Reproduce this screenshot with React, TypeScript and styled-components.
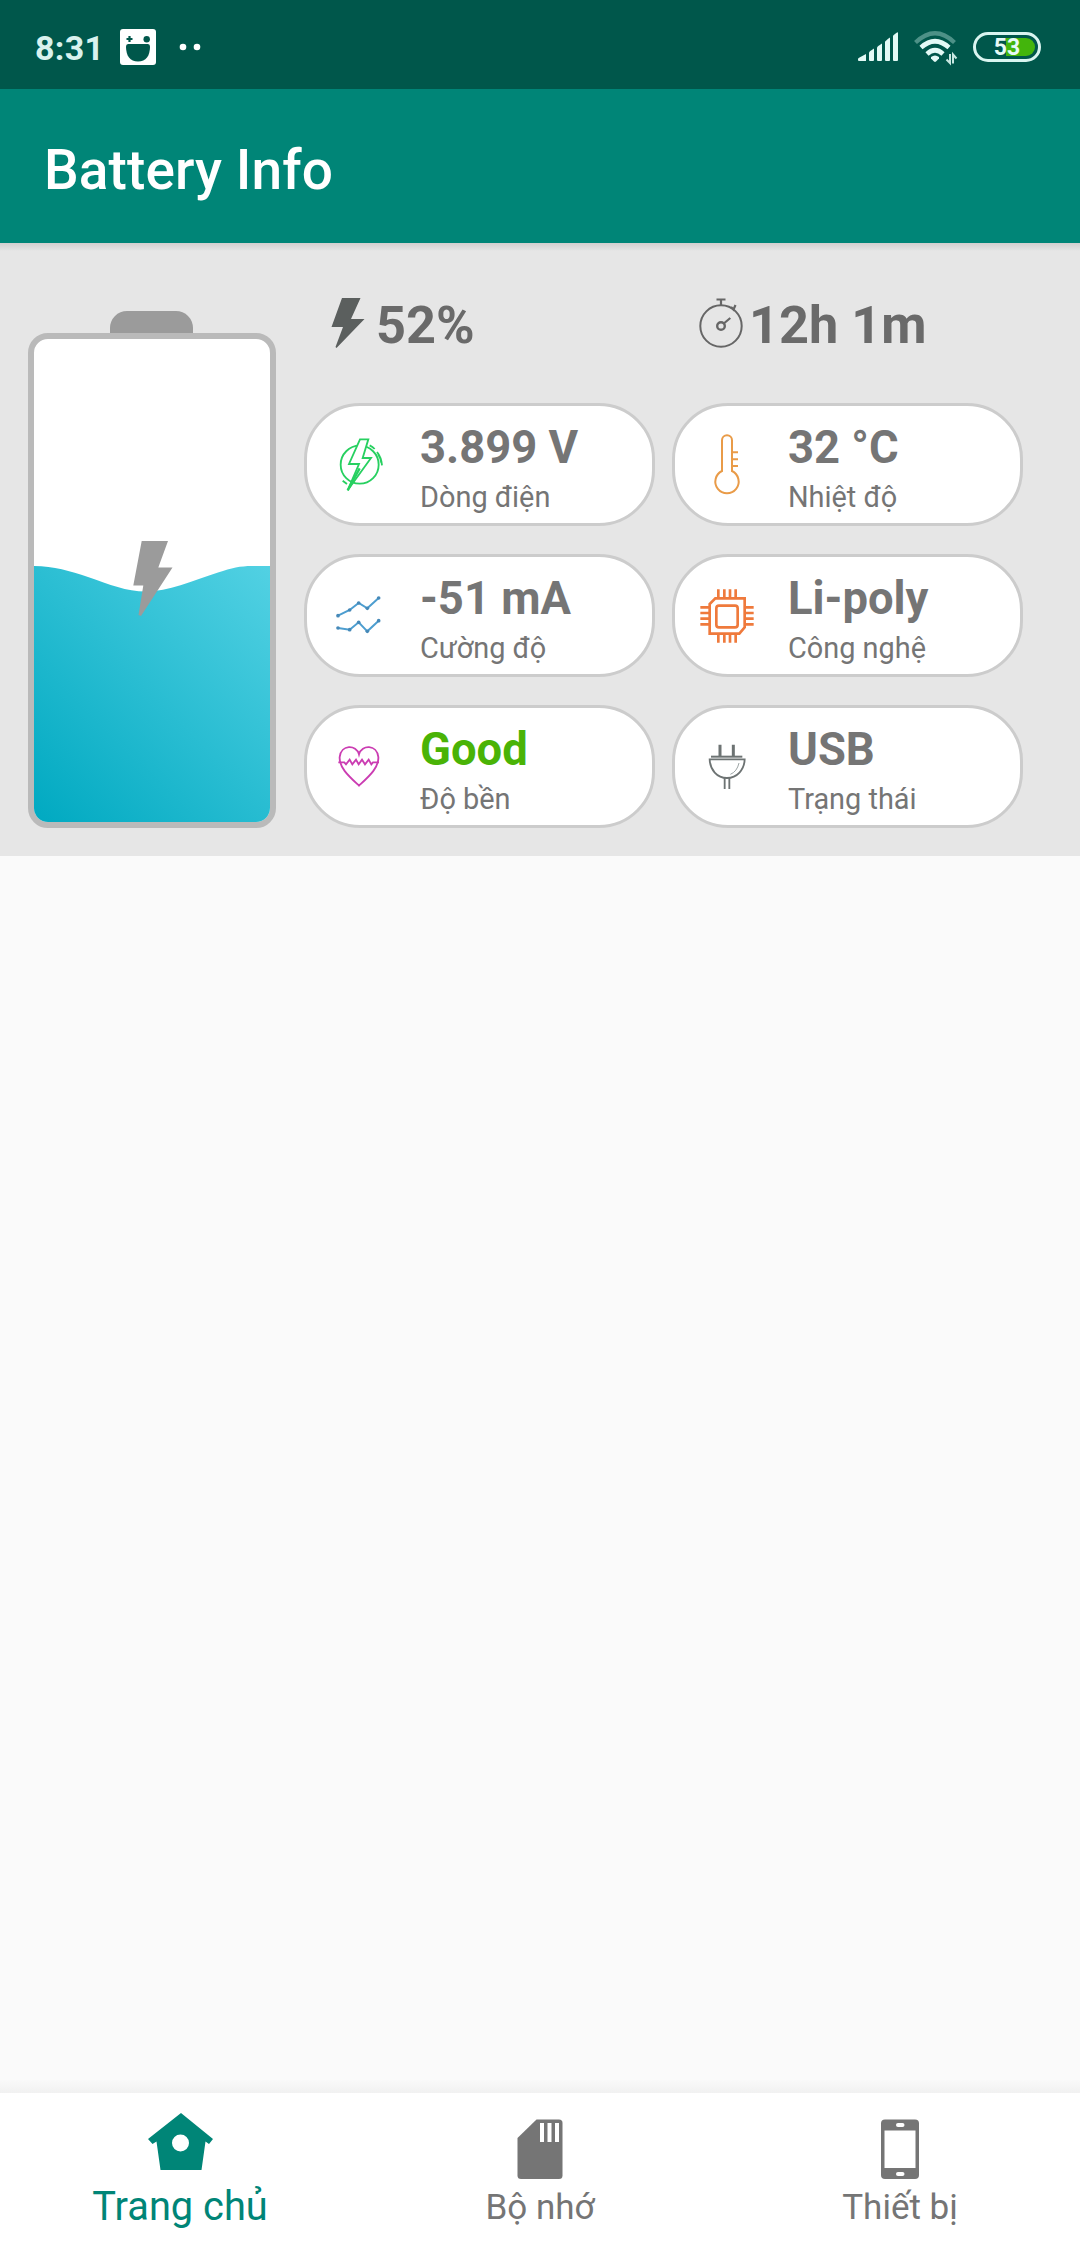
import React from "react";
import styled, { createGlobalStyle } from "styled-components";

const GlobalStyle = createGlobalStyle`
  html, body { margin: 0; padding: 0; }
  body { background: #fafafa; font-family: Roboto, "Noto Sans", sans-serif; }
  * { box-sizing: border-box; }
  svg { display: block; overflow: visible; flex-shrink: 0; }
`;

const Screen = styled.div`
  display: flex;
  flex-direction: column;
  width: 1080px;
  height: 2248px;
  background: #fafafa;
  overflow: hidden;
`;

const StatusBar = styled.header`
  display: flex;
  align-items: center;
  justify-content: space-between;
  height: 89px;
  padding: 5px 39px 0 35px;
  background: #00574b;
`;

const StatusGroup = styled.div<{ $gap: number }>`
  display: flex;
  align-items: center;
  gap: ${(p) => p.$gap}px;
`;

const Clock = styled.span`
  width: 67px;
  padding-top: 2px;
  font-size: 34px;
  line-height: 40px;
  font-weight: 700;
  letter-spacing: 0.3px;
  color: #d9f2ee;
`;

const BatteryPill = styled.div`
  position: relative;
  display: flex;
  align-items: center;
  justify-content: center;
  width: 68px;
  height: 30px;
  padding-top: 2px;
  border: 3px solid #d9f5f0;
  border-radius: 15px;
  color: #e6faf6;
  font-size: 23px;
  font-weight: 700;
  line-height: 24px;

  &::before {
    content: "";
    position: absolute;
    top: 3px;
    right: 3px;
    width: 29px;
    height: 18px;
    border-radius: 0 9px 9px 0;
    background: #43b50c;
  }

  span {
    position: relative;
  }
`;

const AppBar = styled.div`
  display: flex;
  align-items: center;
  height: 154px;
  padding: 7px 44px 0;
  background: #008577;
`;

const Title = styled.h1`
  margin: 0;
  color: #fff;
  font-size: 55px;
  font-weight: 500;
  line-height: 64px;
  letter-spacing: 0.1px;
`;

const Panel = styled.section`
  display: flex;
  gap: 28px;
  height: 613px;
  padding-left: 28px;
  background: linear-gradient(#d2cfcf, #e6e6e6 8px);
`;

const BatteryColumn = styled.div`
  width: 248px;
  padding-top: 68px;
`;

const BatteryCap = styled.div`
  width: 83px;
  height: 22px;
  margin-left: 82px;
  border-radius: 17px 17px 0 0;
  background: #9b9b9b;
`;

const BatteryBody = styled.div`
  width: 248px;
  height: 495px;
  border: 6px solid #bababa;
  border-radius: 20px;
  background: #fff;
  overflow: hidden;
`;

const Details = styled.div`
  display: flex;
  flex-direction: column;
`;

const Summary = styled.div`
  display: grid;
  grid-template-columns: 351px 351px;
  column-gap: 17px;
  height: 160px;
  padding-top: 5px;
`;

const SummaryItem = styled.div<{ $gap: number }>`
  display: flex;
  align-items: center;
  gap: ${(p) => p.$gap}px;
  padding-left: 27px;

  svg {
    margin-bottom: 5px;
  }
`;

const SummaryText = styled.strong`
  color: #6a6a6a;
  font-size: 52.25px;
  font-weight: 700;
  line-height: 60px;
  white-space: nowrap;
`;

const Cards = styled.div`
  display: grid;
  grid-template-columns: 351px 351px;
  grid-auto-rows: 123px;
  gap: 28px 17px;
`;

const Card = styled.article`
  display: flex;
  padding-left: 22px;
  border: 3px solid #ccc;
  border-radius: 56px;
  background: #fff;
`;

const CardIcon = styled.div`
  display: flex;
  align-items: center;
  width: 60px;
`;

const CardText = styled.div`
  padding: 14px 0 0 31px;
  white-space: nowrap;
`;

const Value = styled.div<{ $color?: string }>`
  color: ${(p) => p.$color ?? "#757575"};
  font-size: 45.375px;
  font-weight: 700;
  line-height: 55px;
`;

const Label = styled.div`
  margin-top: 4px;
  color: #757575;
  font-size: 28.9px;
  line-height: 36px;
`;

const Content = styled.main`
  flex: 1;
  background: linear-gradient(to top, #f1f1f1, #fafafa 14px);
`;

const BottomNav = styled.nav`
  display: grid;
  grid-template-columns: repeat(3, 1fr);
  height: 155px;
  background: #fff;
`;

const NavItem = styled.div<{ $active?: boolean }>`
  display: flex;
  flex-direction: column;
  align-items: center;
  gap: ${(p) => (p.$active ? 14 : 6)}px;
  padding-top: ${(p) => (p.$active ? 20 : 26)}px;
  color: ${(p) => (p.$active ? "#008577" : "#757575")};
  font-size: ${(p) => (p.$active ? 39.8 : 35)}px;
  line-height: 46px;
`;

const FaceIcon = () => (
  <svg width="36" height="36" viewBox="0 0 36 36">
    <rect width="36" height="36" rx="3" fill="#fff" />
    <path d="M9.500 7v6M6.500 10h6" stroke="#00574b" strokeWidth="2.200" />
    <circle cx="26.700" cy="10.200" r="3.200" fill="#00574b" />
    <path d="M8 15h20q2 0 2 2.500C30 27 26 32.500 18 32.500S6 27 6 17.500Q6 15 8 15Z" fill="#00574b" />
  </svg>
);

const DotsIcon = () => (
  <svg width="32" height="8" viewBox="-5 0 32 8">
    <circle cx="4" cy="4" r="3.300" fill="#fff" />
    <circle cx="18" cy="4" r="3.300" fill="#fff" />
  </svg>
);

const SignalIcon = () => (
  <svg width="40" height="30" viewBox="0 0 40 30">
    <g fill="#e3faf6">
      <path d="M0 27Q0 26 1.500 25.500L8 22v7H1Q0 29 0 28Z" />
      <path d="M11 20.500Q11 19.500 16 16.500V28q0 1-1 1h-3q-1 0-1-1Z" />
      <path d="M19 15.500Q19 14.500 24 11.500V28q0 1-1 1h-3q-1 0-1-1Z" />
      <path d="M27 10Q27 9 32 5.500V28q0 1-1 1h-3q-1 0-1-1Z" />
      <path d="M35 4Q35 3 39 .5q1-.5 1 .5V28q0 1-1 1h-3q-1 0-1-1Z" />
    </g>
  </svg>
);

const WifiIcon = () => (
  <svg width="43" height="32" viewBox="0 0 43 32" fill="none">
    <path d="M1.500 11.500Q21-7 40.500 11.500" stroke="#4d9187" strokeWidth="4.200" />
    <path d="M7 16.500Q21 4 35 16.500" stroke="#e3faf6" strokeWidth="4.600" />
    <path d="M13 23Q21 15.500 29 23" stroke="#e3faf6" strokeWidth="4.600" />
    <path d="M17 26q4-3 8 0v1.500l-3 3q-1 .8-2 0l-3-3Z" fill="#e3faf6" />
    <path d="M36 23v9L32.500 28.500M39 32.500v-9l3.500 4" stroke="#c8e8e2" strokeWidth="2" />
  </svg>
);

/* Liquid level inside the battery with the charging bolt over its surface */
const BatteryFill = () => (
  <svg width="236" height="483" viewBox="0 0 236 483">
    <defs>
      <linearGradient id="liquid" gradientUnits="userSpaceOnUse" x1="-4" y1="479" x2="240" y2="231">
        <stop offset="0" stopColor="#00a9c1" />
        <stop offset="1" stopColor="#52d1e3" />
      </linearGradient>
    </defs>
    <path
      d="M0 227C20 227 36 232 54 238C76 245.500 92 252.500 112 252.500C134 252.500 158 242 184 233.500C198 229 206 227 218 227H236V483H0Z"
      fill="url(#liquid)"
    />
    <path d="M107.700 202H134L124.300 228.500H138.500L107 277L104.500 276L109.300 246.500H99.300Z" fill="#9b9b9b" />
  </svg>
);

const BoltIcon = () => (
  <svg width="34" height="50" viewBox="0 0 34 50">
    <path d="M11 0H29.500L20 21H33.500L5.500 50L4.500 49L12 29H.5Z" fill="#5b5f5e" />
  </svg>
);

const StopwatchIcon = () => (
  <svg width="44" height="50" viewBox="0 0 44 50" fill="none" stroke="#666" strokeWidth="2">
    <circle cx="22" cy="28" r="20.700" />
    <circle cx="22" cy="28" r="3.800" strokeWidth="2.400" />
    <path d="M17.500 1.500h9M22 1.500v6M24.800 25.500l6.500-5.500M32 9l2.500 2.500 2-4.500" strokeWidth="2.200" />
  </svg>
);

const CardSvg = (props: React.SVGProps<SVGSVGElement>) => (
  <svg width="60" height="60" viewBox="0 0 180 180" fill="none" {...props} />
);

const VoltageIcon = () => (
  <CardSvg stroke="#27d060" strokeWidth="5.500">
    <circle cx="92" cy="89" r="57" />
    <path d="M122 31Q131 35 137 42M144 51Q157 66 159 91M147 57Q155 69 157 84M41 137L54 147" />
    <path d="M93 13H118L101 69H126L56 166L90 87H60Z" fill="#fff" />
    <path d="M92 100L56 166" strokeWidth="7" />
  </CardSvg>
);

const ThermometerIcon = () => (
  <CardSvg stroke="#e99b48" strokeWidth="6">
    <path d="M75 108V16a15 15 0 0 1 30 0V108A35 35 0 1 1 75 108Z" />
    <path d="M105 52h18M105 73h18M105 93h18" />
  </CardSvg>
);

const ChartIcon = () => (
  <CardSvg stroke="#4d9ed0" strokeWidth="6">
    <path d="M27 89L62 72L89 51L115 67L149 36M27 126L62 131L89 109L115 136L149 104" />
    <g fill="#4689b8" stroke="none">
      {[[27, 89], [62, 72], [89, 51], [115, 67], [149, 36], [27, 126], [62, 131], [89, 109], [115, 136], [149, 104]].map(
        ([x, y]) => (
          <circle key={`${x}-${y}`} cx={x} cy={y} r="5.500" />
        )
      )}
    </g>
  </CardSvg>
);

const ChipIcon = () => (
  <CardSvg stroke="#ef7a3c" strokeWidth="8">
    <path d="M55 37H143V124L127 143H38V54Z" />
    <rect x="58" y="59" width="64" height="65" rx="8" />
    <path d="M64 34V10M82 34V10M99 34V10M116 34V10M64 144V170M82 144V170M99 144V170M116 144V170" />
    <path d="M36 64H10M36 81H10M36 98H10M36 115H10M144 64H170M144 81H170M144 98H170M144 115H170" />
  </CardSvg>
);

const HeartIcon = () => (
  <CardSvg stroke="#cb3cb2" strokeWidth="5.500">
    <path d="M90 52C82 22 36 22 32 60C30 92 60 118 90 146C120 118 150 92 148 60C144 22 98 22 90 52Z" />
    <path d="M28 76H46L51 82L62 68L70 82L81 68L89 82L99 68L108 82L119 68L127 82L132 76H150" />
  </CardSvg>
);

const PlugIcon = () => (
  <CardSvg stroke="#6d7373" strokeWidth="5.500">
    <path d="M69 58V23M109 58V23" strokeWidth="9" />
    <path d="M42 59H136" strokeWidth="6" />
    <path d="M38 67H143C142 98 120 123 90 123S39 98 38 67Z" />
    <path d="M126 78Q120 104 100 112" stroke="#9da5a5" strokeWidth="3" />
    <path d="M83 123V156M97 123V156" />
  </CardSvg>
);

const HomeIcon = () => (
  <svg width="65" height="57" viewBox="0 0 65 57">
    <path
      fillRule="evenodd"
      fill="#008577"
      d="M33 0L65 26L61 31L57.500 28.500L53.500 57H12.500L8.500 28.500L4.500 31L0 26ZM32.500 21.500a8.500 8.500 0 1 0 0 17a8.500 8.500 0 1 0 0-17Z"
    />
  </svg>
);

const SdCardIcon = () => (
  <svg width="46" height="60" viewBox="0 0 46 60">
    <path d="M19.500 .5H42q3.500 0 3.500 3.500V56.500q0 3.500-3.500 3.500H4Q.5 60 .5 56.500V19Z" fill="#757575" />
    <path d="M25 4v19M32.500 4v19M40 4v19" stroke="#fff" strokeWidth="4" />
  </svg>
);

const PhoneIcon = () => (
  <svg width="38" height="60" viewBox="0 0 38 60">
    <rect y=".5" width="38" height="59.500" rx="4" fill="#757575" />
    <rect x="3.500" y="11.500" width="31" height="37.500" fill="#fff" />
    <rect x="15" y="4" width="8.500" height="4" rx="2" fill="#fff" />
    <rect x="15" y="53" width="8.500" height="4" rx="2" fill="#fff" />
  </svg>
);

const readings = [
  { icon: <VoltageIcon />, value: "3.899 V", label: "Dòng điện" },
  { icon: <ThermometerIcon />, value: "32 °C", label: "Nhiệt độ" },
  { icon: <ChartIcon />, value: "-51 mA", label: "Cường độ" },
  { icon: <ChipIcon />, value: "Li-poly", label: "Công nghệ" },
  { icon: <HeartIcon />, value: "Good", label: "Độ bền", color: "#4ab306" },
  { icon: <PlugIcon />, value: "USB", label: "Trạng thái" },
];

export default function App() {
  return (
    <Screen>
      <GlobalStyle />
      <StatusBar>
        <StatusGroup $gap={18}>
          <Clock>8:31</Clock>
          <FaceIcon />
          <DotsIcon />
        </StatusGroup>
        <StatusGroup $gap={16}>
          <SignalIcon />
          <WifiIcon />
          <BatteryPill>
            <span>53</span>
          </BatteryPill>
        </StatusGroup>
      </StatusBar>
      <AppBar>
        <Title>Battery Info</Title>
      </AppBar>
      <Panel>
        <BatteryColumn>
          <BatteryCap />
          <BatteryBody>
            <BatteryFill />
          </BatteryBody>
        </BatteryColumn>
        <Details>
          <Summary>
            <SummaryItem $gap={11}>
              <BoltIcon />
              <SummaryText>52%</SummaryText>
            </SummaryItem>
            <SummaryItem $gap={6}>
              <StopwatchIcon />
              <SummaryText>12h 1m</SummaryText>
            </SummaryItem>
          </Summary>
          <Cards>
            {readings.map((r) => (
              <Card key={r.label}>
                <CardIcon>{r.icon}</CardIcon>
                <CardText>
                  <Value $color={r.color}>{r.value}</Value>
                  <Label>{r.label}</Label>
                </CardText>
              </Card>
            ))}
          </Cards>
        </Details>
      </Panel>
      <Content />
      <BottomNav>
        <NavItem $active>
          <HomeIcon />
          <span>Trang chủ</span>
        </NavItem>
        <NavItem>
          <SdCardIcon />
          <span>Bộ nhớ</span>
        </NavItem>
        <NavItem>
          <PhoneIcon />
          <span>Thiết bị</span>
        </NavItem>
      </BottomNav>
    </Screen>
  );
}
